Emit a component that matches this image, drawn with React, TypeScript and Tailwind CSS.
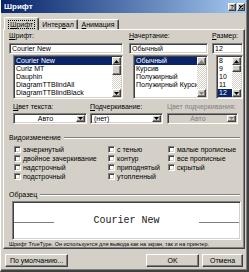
import React from 'react';

const raised =
  'border border-t-white border-l-white border-r-[#404040] border-b-[#404040] shadow-[inset_-1px_-1px_0_#808080]';
const sunken =
  'border border-t-[#808080] border-l-[#808080] border-r-white border-b-white shadow-[inset_1px_1px_0_#404040,inset_-1px_-1px_0_#d4d0c8]';

function Arrow({ up = false, color = '#000000' }: { up?: boolean; color?: string }) {
  return (
    <svg width="5" height="3" viewBox="0 0 5 3" className="block">
      <path d={up ? 'M2.5 0L5 3H0Z' : 'M0 0H5L2.5 3Z'} fill={color} />
    </svg>
  );
}

function ScrollBar({ thumb, disabled }: { thumb?: string; disabled?: boolean }) {
  const c = disabled ? '#808080' : '#000000';
  return (
    <div className="w-[9px] flex flex-col shrink-0">
      <div className={`${raised} h-[8px] shrink-0 bg-[#d4d0c8] flex items-center justify-center`}>
        <Arrow up color={c} />
      </div>
      {thumb && <div className={`${raised} ${thumb} shrink-0 bg-[#d4d0c8]`} />}
      <div className="flex-1 bg-[image:repeating-conic-gradient(#d4d0c8_0_25%,#ffffff_0_50%)] bg-[length:2px_2px]" />
      <div className={`${raised} h-[8px] shrink-0 bg-[#d4d0c8] flex items-center justify-center`}>
        <Arrow color={c} />
      </div>
    </div>
  );
}

function ListBox({
  items,
  sel,
  className,
  thumb,
  disabled,
}: {
  items: string[];
  sel: string;
  className: string;
  thumb?: string;
  disabled?: boolean;
}) {
  return (
    <div className={`${sunken} bg-white flex p-[1px] h-[44px] ${className}`}>
      <div className="flex-1 min-w-0 overflow-hidden">
        {items.map((it) => (
          <div
            key={it}
            className={`h-[8px] leading-[8px] pl-[1px] whitespace-nowrap ${it === sel ? 'bg-[#0a246a] text-white' : ''}`}
          >
            {it}
          </div>
        ))}
      </div>
      <ScrollBar thumb={thumb} disabled={disabled} />
    </div>
  );
}

function Combo({
  value,
  className,
  center,
  disabled,
}: {
  value: string;
  className: string;
  center?: boolean;
  disabled?: boolean;
}) {
  return (
    <div
      className={`${sunken} ${disabled ? 'bg-[#d4d0c8] text-[#808080]' : 'bg-white'} h-[11px] flex p-[1px] ${className}`}
    >
      <div className={`flex-1 leading-[7px] px-[2px] whitespace-nowrap ${center ? 'text-center' : ''}`}>{value}</div>
      <div className={`${raised} w-[9px] bg-[#d4d0c8] flex items-center justify-center`}>
        <Arrow color={disabled ? '#808080' : '#000000'} />
      </div>
    </div>
  );
}

function GroupTitle({ text, className }: { text: string; className: string }) {
  return (
    <div className={`flex items-center h-[8px] pl-[5px] pr-[4px] ${className}`}>
      <span className="whitespace-nowrap">{text}</span>
      <div className="flex-1 ml-[3px] h-[2px] border-t border-t-[#808080] border-b border-b-white" />
    </div>
  );
}

function Check({ label }: { label: string }) {
  return (
    <div className="flex items-center h-[9px] gap-[2px]">
      <div className={`${sunken} bg-white w-[7px] h-[7px] shrink-0`} />
      <span className="whitespace-nowrap">{label}</span>
    </div>
  );
}

function U({ c }: { c: string }) {
  return <span className="underline underline-offset-[1px]">{c}</span>;
}

export default function App() {
  return (
    <div className="w-[249px] h-[272px] bg-[#d4d0c8] border-l border-l-white border-r-2 border-r-[#404040] border-b-2 border-b-[#404040] shadow-[inset_-1px_-1px_0_#808080] flex flex-col font-['Liberation_Sans',Arial,sans-serif] text-[7px] leading-[8px] text-black overflow-hidden">
      {/* title bar */}
      <div className="h-[13px] mr-[1px] shrink-0 bg-linear-to-r from-[#0a246a] to-[#a6caf0] flex items-center pl-[3px] pr-[1px]">
        <span className="text-white font-bold text-[8px] leading-[9px]">Шрифт</span>
        <div className="ml-auto flex gap-[1px]">
          <div className={`${raised} w-[8px] h-[8px] bg-[#d4d0c8] flex items-center justify-center text-[6px] leading-[6px] font-bold`}>
            ?
          </div>
          <div className={`${raised} w-[8px] h-[8px] bg-[#d4d0c8] flex items-center justify-center`}>
            <svg width="4" height="4" viewBox="0 0 4 4" className="block">
              <path d="M0 0L4 4M4 0L0 4" stroke="#000" strokeWidth="1.2" />
            </svg>
          </div>
        </div>
      </div>

      {/* tabs */}
      <div className="flex items-end h-[12px] mt-[4px] ml-[3px] relative z-10 shrink-0">
        <div className="h-[13px] w-[35px] -mb-[1px] bg-[#d4d0c8] border-t border-l border-r border-t-white border-l-white border-r-[#404040] shadow-[inset_-1px_0_0_#808080] rounded-t-[2px] flex items-center justify-center">
          <span className="outline outline-1 outline-dotted outline-black px-[1px] leading-[7px]">
            <U c="Ш" />рифт
          </span>
        </div>
        <div className="h-[10px] w-[39px] border-t border-r border-t-white border-r-[#404040] shadow-[inset_-1px_0_0_#808080] rounded-t-[2px] flex items-center justify-center leading-[7px]">
          Интер<U c="в" />ал
        </div>
        <div className="h-[10px] w-[41px] border-t border-r border-t-white border-r-[#404040] shadow-[inset_-1px_0_0_#808080] rounded-t-[2px] flex items-center justify-center leading-[7px]">
          <U c="А" />нимация
        </div>
      </div>

      {/* panel */}
      <div className="ml-[2px] w-[242px] h-[220px] shrink-0 border border-t-white border-l-white border-r-[#404040] border-b-[#404040] shadow-[inset_-1px_-1px_0_#808080] flex flex-col">
        <div className="flex pl-[5px] pt-[2px] gap-[6px]">
          <div className="w-[114px] flex flex-col">
            <div className="h-[8px]">
              <U c="Ш" />рифт:
            </div>
            <div className={`${sunken} bg-white h-[11px] mt-[3px] p-[1px] pl-[2px] leading-[7px]`}>Courier New</div>
            <ListBox
              className="mt-[1px] ml-[4px]"
              items={['Courier New', 'Curlz MT', 'Dauphin', 'DiagramTTBlindAll', 'DiagramTTBlindBlack']}
              sel="Courier New"
              thumb="h-[10px]"
            />
          </div>
          <div className="w-[79px] flex flex-col">
            <div className="h-[8px]">
              <U c="Н" />ачертание:
            </div>
            <div className={`${sunken} bg-white h-[11px] mt-[3px] p-[1px] pl-[2px] leading-[7px]`}>Обычный</div>
            <ListBox
              className="mt-[1px] ml-[4px]"
              items={['Обычный', 'Курсив', 'Полужирный', 'Полужирный Курсив']}
              sel="Обычный"
              disabled
            />
          </div>
          <div className="w-[31px] flex flex-col ml-[-2px]">
            <div className="h-[8px]">
              <U c="Р" />азмер:
            </div>
            <div className={`${sunken} bg-white h-[11px] mt-[3px] p-[1px] pl-[2px] leading-[7px]`}>12</div>
            <ListBox className="mt-[1px] ml-[4px]" items={['8', '9', '10', '11', '12']} sel="12" thumb="h-[7px]" />
          </div>
        </div>

        <div className="flex pl-[9px] gap-[3px] mt-[4px]">
          <div className="w-[74px] flex flex-col">
            <div className="h-[8px]">
              <U c="Ц" />вет текста:
            </div>
            <Combo className="mt-[2px]" value="Авто" center />
          </div>
          <div className="w-[73px] flex flex-col">
            <div className="h-[8px]">
              <U c="П" />одчеркивание:
            </div>
            <Combo className="mt-[2px]" value="(нет)" />
          </div>
          <div className="w-[71px] flex flex-col ml-[1px] text-[#808080]">
            <div className="h-[8px]">Цвет подчеркивания:</div>
            <Combo className="mt-[2px]" value="Авто" center disabled />
          </div>
        </div>

        <GroupTitle text="Видоизменение" className="mt-[10px]" />
        <div className="grid grid-cols-[94px_60px_1fr] pl-[10px] mt-[3px]">
          <div className="flex flex-col">
            <Check label="зачеркнутый" />
            <Check label="двойное зачеркивание" />
            <Check label="надстрочный" />
            <Check label="подстрочный" />
          </div>
          <div className="flex flex-col">
            <Check label="с тенью" />
            <Check label="контур" />
            <Check label="приподнятый" />
            <Check label="утопленный" />
          </div>
          <div className="flex flex-col">
            <Check label="малые прописные" />
            <Check label="все прописные" />
            <Check label="скрытый" />
          </div>
        </div>

        <GroupTitle text="Образец" className="mt-[10px]" />
        <div className={`${sunken} bg-white h-[39px] mt-[2px] ml-[8px] mr-[3px] flex items-center p-[1px]`}>
          <div className="w-[40px] h-px bg-[#808080] mt-[4px]" />
          <div className="flex-1 text-center font-['Liberation_Mono',monospace] text-[10px] leading-[12px] text-[#202020]">
            Courier New
          </div>
          <div className="w-[40px] h-px bg-[#808080] mt-[4px]" />
        </div>
        <div className="h-[6px] mt-[1px] pl-[5px] text-[5.5px] leading-[6px] whitespace-nowrap">
          Шрифт TrueType. Он используется для вывода как на экран, так и на принтер.
        </div>
      </div>

      {/* buttons */}
      <div className="flex mt-[5px] ml-[4px] mr-[4px] h-[13px]">
        <div className={`${raised} w-[63px] flex items-center justify-center`}>
          По умолчанию...
        </div>
        <div className={`${raised} w-[53px] ml-auto flex items-center justify-center`}>OK</div>
        <div className={`${raised} w-[41px] ml-[3px] flex items-center justify-center`}>Отмена</div>
      </div>
    </div>
  );
}
